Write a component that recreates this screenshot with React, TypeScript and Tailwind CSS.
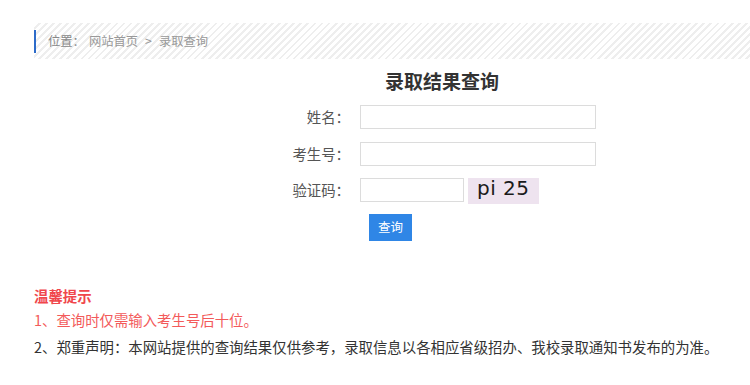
export default function App() {
  const font = { fontFamily: '"Noto Sans CJK SC", "Noto Sans", sans-serif' };

  return (
    <div className="w-[750px] h-[385px] overflow-hidden bg-white" style={font}>
      <div className="ml-[34px] w-[816px]">
        {/* breadcrumb */}
        <div className="mt-[23px] h-[36px] flex items-center bg-[repeating-linear-gradient(135deg,#ffffff_0px,#ffffff_3px,#eeeeee_3px,#eeeeee_5px)]">
          <div className="h-[23px] border-l-2 border-[#2d6bc9] pl-[12px] flex items-center text-[12.3px] text-[#999]">
            <span className="text-[#888]">位置：</span>
            <span className="ml-[4px]">网站首页</span>
            <span className="mx-[7px]">&gt;</span>
            <span>录取查询</span>
          </div>
        </div>

        <h1 className="mt-[8px] text-center text-[19px] leading-[28px] font-bold text-[#333]">录取结果查询</h1>

        <div className="mt-[10px] text-[14.4px] text-[#555]">
          <div className="flex items-center">
            <label className="w-[316px] text-right">姓名：</label>
            <input className="ml-[10px] w-[236px] h-[24px] border border-[#dcdcdc] outline-none" />
          </div>
          <div className="mt-[13px] flex items-center">
            <label className="w-[316px] text-right">考生号：</label>
            <input className="ml-[10px] w-[236px] h-[24px] border border-[#dcdcdc] outline-none" />
          </div>
          <div className="mt-[12px] flex items-start">
            <label className="w-[316px] text-right leading-[24px]">验证码：</label>
            <input className="ml-[10px] w-[104px] h-[24px] border border-[#dcdcdc] outline-none" />
            <div
              className="ml-[4px] w-[71px] h-[26px] bg-[#eee3ef] pl-[9px] text-[20px] leading-[20px] tracking-[0.5px] text-[#1a1a1a]"
              style={{ fontFamily: '"DejaVu Sans", sans-serif' }}
            >
              pi&nbsp;25
            </div>
          </div>
          <button className="mt-[10px] ml-[335px] w-[43px] h-[27px] bg-[#2f86e6] text-white text-[12.5px]">查询</button>
        </div>

        {/* tips */}
        <div className="mt-[42px] text-[14.4px]">
          <div className="font-bold text-[#f0474c] leading-[25px]">温馨提示</div>
          <div className="text-[#f35a5a] leading-[24px]">1、查询时仅需输入考生号后十位。</div>
          <div className="mt-[3px] text-[#333] leading-[24px]">2、郑重声明：本网站提供的查询结果仅供参考，录取信息以各相应省级招办、我校录取通知书发布的为准。</div>
        </div>
      </div>
    </div>
  );
}
